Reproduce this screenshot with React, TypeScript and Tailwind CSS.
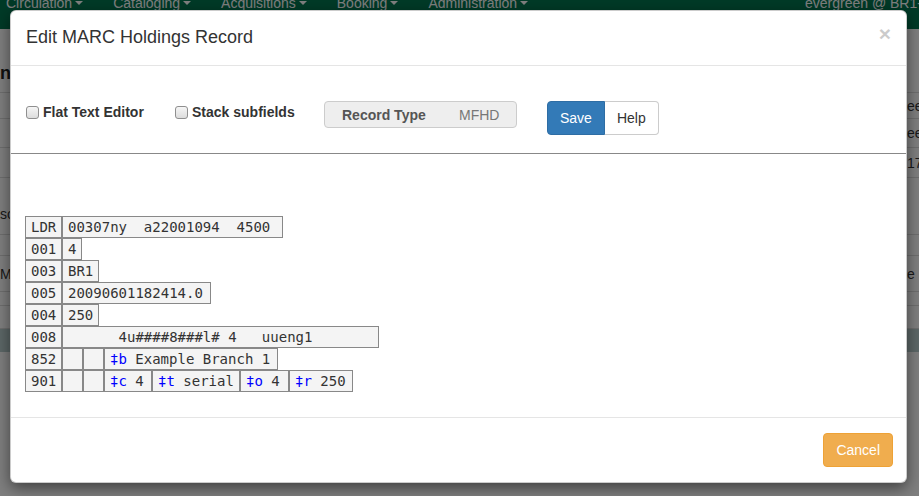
import React from "react"

type Sub = { code: string; text: string; w: string }
type MarcRow = { tag: string; data?: { text: string; w: string }; subs?: Sub[] }

const marc: MarcRow[] = [
    { tag: "LDR", data: { text: "00307ny  a22001094  4500", w: "w-[221px]" } },
    { tag: "001", data: { text: "4", w: "w-[20px]" } },
    { tag: "003", data: { text: "BR1", w: "w-[37px]" } },
    { tag: "005", data: { text: "20090601182414.0", w: "w-[149px]" } },
    { tag: "004", data: { text: "250", w: "w-[37px]" } },
    { tag: "008", data: { text: "      4u####8###l# 4   uueng1", w: "w-[317px]" } },
    { tag: "852", subs: [{ code: "b", text: "Example Branch 1", w: "w-[174px]" }] },
    {
        tag: "901",
        subs: [
            { code: "c", text: "4", w: "w-[48px]" },
            { code: "t", text: "serial", w: "w-[88px]" },
            { code: "o", text: "4", w: "w-[49px]" },
            { code: "r", text: "250", w: "w-[64px]" },
        ],
    },
]

const navItems = ["Circulation", "Cataloging", "Acquisitions", "Booking", "Administration"]

// rows of the page that sits behind the modal backdrop
const pageRows = [
    { h: "h-[26px] items-center", left: "", right: "ee", band: false },
    { h: "h-[29px] items-center", left: "", right: "ee", band: false },
    { h: "h-[30px] items-center", left: "", right: "17", band: false },
    { h: "h-[57px] items-start pt-[26px]", left: "sc", right: "", band: false },
    { h: "h-[21px] items-center", left: "", right: "", band: false },
    { h: "h-[36px] items-center", left: "M", right: "e", band: false },
    { h: "h-[14px] items-center", left: "", right: "", band: false },
    { h: "h-[23px] items-center", left: "", right: "", band: false },
    { h: "h-[24px] items-center", left: "", right: "", band: true },
]

function Cell({ w, children }: { w: string; children: React.ReactNode }) {
    return (
        <div className={`${w} h-[22px] shrink-0 border border-[#888] bg-[#f4f4f4] pl-[5px] leading-[20px] whitespace-pre overflow-hidden`}>
            {children}
        </div>
    )
}

function Checkbox({ label }: { label: string }) {
    return (
        <label className="w-[149px] h-[22px] flex items-center gap-[4px]">
            <span className="w-[13px] h-[13px] rounded-[3px] border border-[#8f8f8f] bg-gradient-to-b from-[#f6f6f6] to-[#dcdcdc]" />
            <span className="font-bold text-[#333]">{label}</span>
        </label>
    )
}

export default function App() {
    return (
        <div className="relative w-[919px] h-[496px] overflow-hidden bg-white font-['Liberation_Sans',Arial,sans-serif] text-sm text-[#333]">
            {/* Page behind */}
            <div className="flex flex-col">
                <nav className="h-[29px] bg-[#00744f] flex items-start justify-between text-white overflow-hidden">
                    <div className="flex gap-[30px] pl-[6px] -mt-[7px]">
                        {navItems.map((n) => (
                            <span key={n} className="flex items-center gap-[3px]">
                                {n}
                                <span className="w-0 h-0 border-x-4 border-x-transparent border-t-4 border-t-white" />
                            </span>
                        ))}
                    </div>
                    <span className="-mt-[7px] w-[114px] shrink-0 overflow-hidden whitespace-nowrap">evergreen @ BR1-</span>
                </nav>
                <div className="h-[63px] flex items-end pb-[5px]">
                    <span className="w-[10px] overflow-hidden whitespace-nowrap text-lg font-bold text-[#222]">nn</span>
                </div>
                {pageRows.map((r, i) => (
                    <div
                        key={i}
                        className={`${r.h} flex justify-between border-t border-[#ddd] ${r.band ? "bg-[#b9cfcf]" : ""}`}
                    >
                        <span className="w-[10px] overflow-hidden whitespace-nowrap text-[#333]">{r.left}</span>
                        <span className="w-[12px] overflow-hidden whitespace-nowrap text-[#333]">{r.right}</span>
                    </div>
                ))}
            </div>

            {/* Backdrop */}
            <div className="absolute inset-0 bg-black/50" />

            {/* Modal */}
            <div className="absolute left-[10px] top-[10px] w-[897px] bg-white rounded-[6px] border border-black/20 shadow-[0_5px_15px_rgba(0,0,0,0.5)]">
                <div className="flex items-start justify-between px-[15px] pt-[13px] pb-[15px] border-b border-[#e5e5e5]">
                    <h4 className="text-[18px] leading-[26px] text-[#333]">Edit MARC Holdings Record</h4>
                    <span className="text-[21px] font-bold leading-none text-black opacity-20 -mt-[1px]">×</span>
                </div>

                <div>
                    <div className="flex items-start pl-[15px] pt-[35px]">
                        <Checkbox label="Flat Text Editor" />
                        <Checkbox label="Stack subfields" />
                        <div className="w-[193px] h-[27px] flex items-center pl-[17px] bg-[#eee] border border-[#ccc] rounded-[4px]">
                            <span className="w-[117px] font-bold text-[#555]">Record Type</span>
                            <span className="text-[#777]">MFHD</span>
                        </div>
                        <div className="ml-[30px] flex">
                            <button className="h-[34px] px-[12px] bg-[#337ab7] border border-[#2e6da4] text-white rounded-l-[4px]">Save</button>
                            <button className="h-[34px] px-[12px] bg-white border border-l-0 border-[#ccc] text-[#333] rounded-r-[4px]">Help</button>
                        </div>
                    </div>

                    <div className="mt-[18px] border-t border-[#888]" />

                    <div className="mt-[62px] mb-[25px] pl-[14px] flex flex-col font-['DejaVu_Sans_Mono',monospace] text-[14px] text-[#333]">
                        {marc.map((row) => (
                            <div key={row.tag} className="flex">
                                <Cell w="w-[37px]">{row.tag}</Cell>
                                {row.data && <Cell w={row.data.w}>{row.data.text}</Cell>}
                                {row.subs && (
                                    <>
                                        <Cell w="w-[21px]">{""}</Cell>
                                        <Cell w="w-[21px]">{""}</Cell>
                                        {row.subs.map((s) => (
                                            <Cell key={s.code} w={s.w}>
                                                <span className="text-[#00f]">‡{s.code}</span> {s.text}
                                            </Cell>
                                        ))}
                                    </>
                                )}
                            </div>
                        ))}
                    </div>
                </div>

                <div className="flex justify-end border-t border-[#e5e5e5] pt-[15px] pb-[15px] pr-[13px]">
                    <button className="h-[34px] px-[12px] bg-[#f0ad4e] border border-[#eea236] text-white rounded-[4px]">Cancel</button>
                </div>
            </div>
        </div>
    )
}
